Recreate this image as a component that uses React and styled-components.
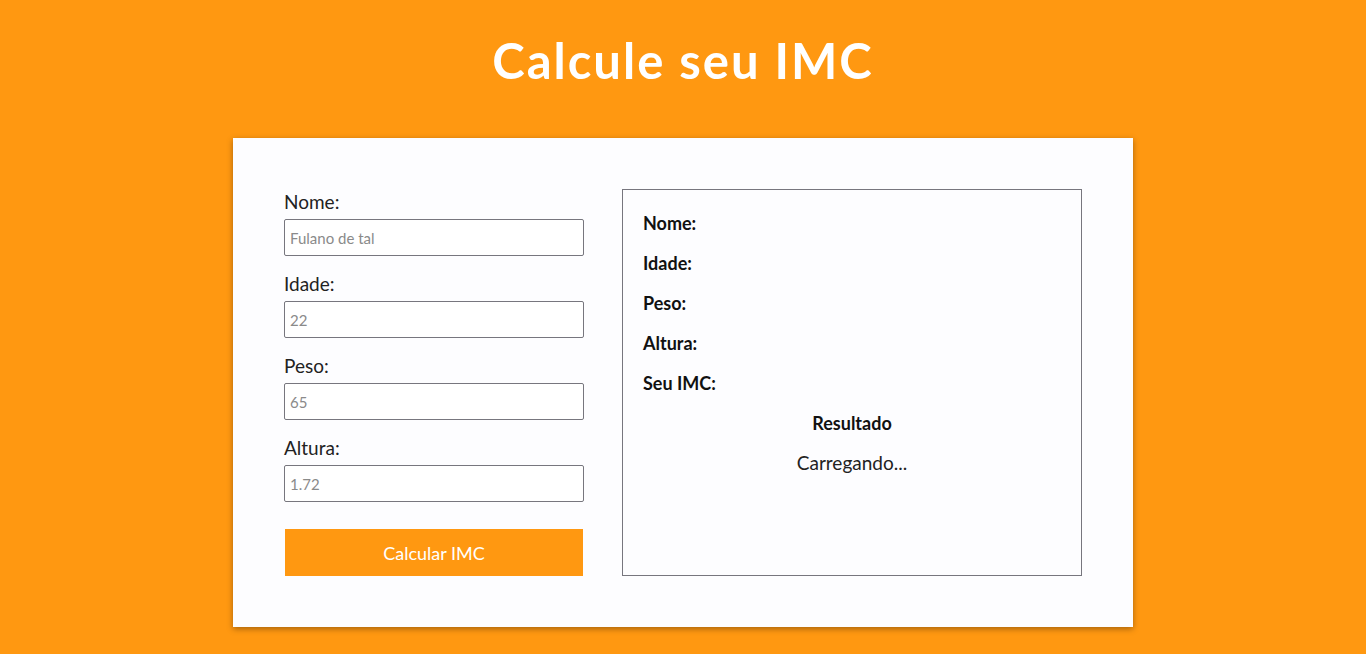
import styled, { createGlobalStyle } from 'styled-components';

const GlobalStyle = createGlobalStyle`
    body {
        margin: 0;
        background: #ff9811;
        font-family: "Lato", "Noto Sans", sans-serif;
    }
`

const fields = [
    { label: 'Nome:', placeholder: 'Fulano de tal' },
    { label: 'Idade:', placeholder: '22' },
    { label: 'Peso:', placeholder: '65' },
    { label: 'Altura:', placeholder: '1.72' },
]

const resultRows = ['Nome:', 'Idade:', 'Peso:', 'Altura:', 'Seu IMC:']

export default function App() {
    return (
        <Page>
            <GlobalStyle />
            <Title>Calcule seu IMC</Title>
            <Card>
                <Form onSubmit={(e) => e.preventDefault()}>
                    {
                        fields.map((f) => (
                            <Field key={f.label}>
                                <Label>{f.label}</Label>
                                <Input placeholder={f.placeholder} />
                            </Field>
                        ))
                    }
                    <Button type='submit'>Calcular IMC</Button>
                </Form>
                <Result>
                    {
                        resultRows.map((r) => <ResultRow key={r}>{r}</ResultRow>)
                    }
                    <ResultTitle>Resultado</ResultTitle>
                    <Loading>Carregando...</Loading>
                </Result>
            </Card>
        </Page>
    )
}

const Page = styled.div`
    min-height: 654px;
    display: flex;
    flex-direction: column;
    align-items: center;
    padding-top: 29px;
    box-sizing: border-box;
`

const Title = styled.h1`
    margin: 0;
    color: #fff;
    font-size: 49px;
    font-weight: 700;
    line-height: 62px;
    letter-spacing: 2px;
`

const Card = styled.div`
    margin-top: 47px;
    width: 900px;
    height: 489px;
    box-sizing: border-box;
    padding: 51px;
    background: #fdfdff;
    box-shadow: 0 2px 6px rgba(0, 0, 0, 0.35);
    display: flex;
    gap: 38px;
`

const Form = styled.form`
    width: 300px;
    padding-top: 1px;
    display: flex;
    flex-direction: column;
    gap: 16px;
`

const Field = styled.div`
    display: flex;
    flex-direction: column;
    gap: 5px;
`

const Label = styled.label`
    font-size: 19px;
    color: #222;
    line-height: 24px;
`

const Input = styled.input`
    height: 37px;
    box-sizing: border-box;
    width: 100%;
    border: 1px solid #77767e;
    border-radius: 2px;
    padding: 0 5px;
    font-family: inherit;
    font-size: 15px;
    background: #fff;
    &::placeholder {
        color: #8a8a8a;
    }
`

const Button = styled.button`
    margin-top: 11px;
    height: 47px;
    width: 298px;
    margin-left: 1px;
    border: none;
    background: #ff9811;
    color: #fff;
    font-family: inherit;
    font-size: 18px;
    cursor: pointer;
`

const Result = styled.div`
    width: 460px;
    height: 387px;
    box-sizing: border-box;
    border: 1px solid #77767e;
    padding: 13px 20px;
    display: flex;
    flex-direction: column;
`

const ResultRow = styled.div`
    font-size: 18px;
    font-weight: 700;
    color: #111;
    line-height: 40px;
`

const ResultTitle = styled(ResultRow)`
    text-align: center;
`

const Loading = styled.div`
    text-align: center;
    font-size: 19px;
    color: #222;
    line-height: 40px;
`
